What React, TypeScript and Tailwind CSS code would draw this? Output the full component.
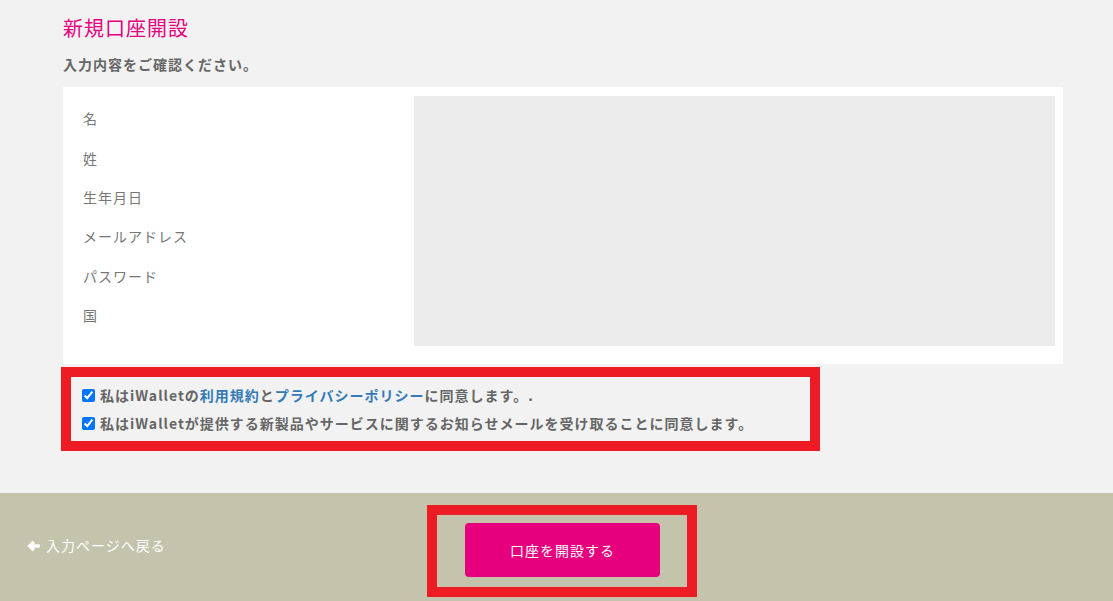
const fields = ['名', '姓', '生年月日', 'メールアドレス', 'パスワード', '国'];

function BackArrow() {
  return (
    <svg viewBox="0 0 14 14" className="h-[14px] w-[13px]" fill="white">
      <path
        d="M0.8 7 L6 1.6 L8.3 3.9 L6.4 5.6 H13.4 V8.4 H6.4 L8.3 10.1 L6 12.4 Z"
        stroke="white"
        strokeWidth="0.8"
        strokeLinejoin="round"
      />
    </svg>
  );
}

export default function App() {
  return (
    <div
      className="min-h-[601px] bg-[#f2f2f2] tracking-[1px]"
      style={{ fontFamily: '"Noto Sans CJK JP", "Noto Sans", sans-serif' }}
    >
      <div className="ml-[63px] w-[1000px] pt-[13px] pb-[42px]">
        <h1 className="text-[20px] leading-[30px] text-[#e4007f]">新規口座開設</h1>
        <p className="mt-[11px] text-[14px] leading-[20px] font-bold text-[#666]">
          入力内容をご確認ください。
        </p>

        {/* confirmation card */}
        <div className="mt-[13px] flex h-[277px] bg-white">
          <div className="w-[351px] pl-[20px] pt-[12px]">
            {fields.map((f) => (
              <div key={f} className="flex h-[39.4px] items-center text-[14px] text-[#777]">
                {f}
              </div>
            ))}
          </div>
          <div className="mt-[9px] mr-[8px] h-[250px] flex-1 bg-[#ececec]" />
        </div>

        {/* agreements */}
        <div className="mt-[3px] -ml-[2px] w-[759px] border-[10px] border-[#ed1c24] px-[11px] py-[4px]">
          <label className="flex h-[28px] items-center gap-[5px] text-[14px] font-bold text-[#666]">
            <input type="checkbox" checked readOnly className="h-[13px] w-[13px]" />
            <span>
              私はiWalletの<a className="text-[#337ab7]">利用規約</a>と
              <a className="text-[#337ab7]">プライバシーポリシー</a>に同意します。.
            </span>
          </label>
          <label className="flex h-[28px] items-center gap-[5px] text-[14px] font-bold text-[#666]">
            <input type="checkbox" checked readOnly className="h-[13px] w-[13px]" />
            <span>私はiWalletが提供する新製品やサービスに関するお知らせメールを受け取ることに同意します。</span>
          </label>
        </div>
      </div>

      {/* footer */}
      <div className="flex h-[108px] items-start bg-[#c4c3ab] pl-[27px] pt-[12px]">
        <a className="mt-[30px] flex w-[400px] items-center gap-[6px] text-[14px] text-white">
          <BackArrow />
          入力ページへ戻る
        </a>
        <div className="border-[10px] border-[#ed1c24] pl-[28px] pr-[27px] pt-[8px] pb-[10px]">
          <button className="h-[54px] w-[195px] rounded-[4px] bg-[#e6007e] text-[14px] text-white">
            口座を開設する
          </button>
        </div>
      </div>
    </div>
  );
}
